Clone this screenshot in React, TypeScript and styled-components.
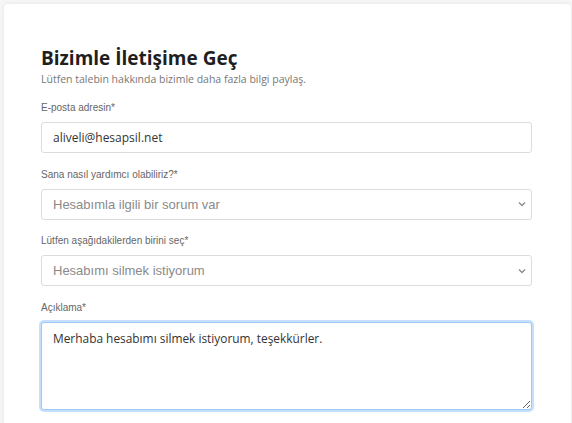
import React from "react";
import styled, { createGlobalStyle } from "styled-components";

const GlobalStyle = createGlobalStyle`
  html, body {
    margin: 0;
    padding: 0;
    background: #f6f6f6;
  }
  * {
    box-sizing: border-box;
  }
`;

const Page = styled.div`
  padding: 4px 1px 0 4px;
  height: 423px;
  overflow: hidden;
`;

const Card = styled.div`
  background: #fff;
  border-radius: 4px;
  box-shadow: 0 0 4px rgba(0, 0, 0, 0.08);
  padding: 42px 39px 40px 37px;
  min-height: 440px;
`;

const Title = styled.h1`
  margin: 0;
  font-family: "Open Sans", "Liberation Sans", sans-serif;
  font-weight: 700;
  font-size: 19px;
  line-height: 24px;
  color: #1f1f1f;
`;

const Subtitle = styled.p`
  margin: 2px 0 15px;
  font-family: "Open Sans", "Liberation Sans", sans-serif;
  font-size: 10.5px;
  line-height: 14px;
  color: #777;
`;

const Field = styled.div`
  display: flex;
  flex-direction: column;
  margin-bottom: 14.5px;
`;

const Label = styled.label`
  font-family: "Liberation Sans", Arial, sans-serif;
  font-size: 10px;
  line-height: 14px;
  color: #666;
  margin-bottom: 7px;
`;

const TextInput = styled.input`
  height: 31px;
  border: 1px solid #dcdcdc;
  border-radius: 3px;
  padding: 0 11px;
  font-family: "Open Sans", "Liberation Sans", sans-serif;
  font-size: 12px;
  color: #333;
  background: #fff;
  outline: none;
`;

const SelectWrap = styled.div`
  position: relative;
`;

const Select = styled.select`
  width: 100%;
  height: 31px;
  border: 1px solid #dcdcdc;
  border-radius: 3px;
  padding: 0 11px;
  font-family: "Liberation Sans", Arial, sans-serif;
  font-size: 13px;
  color: #8a8a8a;
  background: #fff;
  appearance: none;
  outline: none;
`;

const Chevron = styled.svg`
  position: absolute;
  right: 6px;
  top: 12.5px;
  pointer-events: none;
`;

const TextArea = styled.textarea`
  height: 88px;
  border: 1px solid #9ec8f6;
  border-radius: 3px;
  box-shadow: 0 0 0 2px #c6dffb;
  padding: 7px 11px;
  font-family: "Open Sans", "Liberation Sans", sans-serif;
  font-size: 11.9px;
  color: #333;
  resize: vertical;
  outline: none;
`;

const ChevronIcon = () => (
  <Chevron width="8" height="6" viewBox="0 0 8 6">
    <path d="M1 1.5 L4 4.5 L7 1.5" fill="none" stroke="#8a8a8a" strokeWidth="1.3" />
  </Chevron>
);

export default function App() {
  return (
    <Page>
      <GlobalStyle />
      <Card>
        <Title>Bizimle İletişime Geç</Title>
        <Subtitle>Lütfen talebin hakkında bizimle daha fazla bilgi paylaş.</Subtitle>

        <Field>
          <Label>E-posta adresin*</Label>
          <TextInput defaultValue="aliveli@hesapsil.net" />
        </Field>

        <Field>
          <Label>Sana nasıl yardımcı olabiliriz?*</Label>
          <SelectWrap>
            <Select defaultValue="a">
              <option value="a">Hesabımla ilgili bir sorum var</option>
            </Select>
            <ChevronIcon />
          </SelectWrap>
        </Field>

        <Field>
          <Label>Lütfen aşağıdakilerden birini seç*</Label>
          <SelectWrap>
            <Select defaultValue="b">
              <option value="b">Hesabımı silmek istiyorum</option>
            </Select>
            <ChevronIcon />
          </SelectWrap>
        </Field>

        <Field>
          <Label>Açıklama*</Label>
          <TextArea defaultValue="Merhaba hesabımı silmek istiyorum, teşekkürler." />
        </Field>
      </Card>
    </Page>
  );
}
